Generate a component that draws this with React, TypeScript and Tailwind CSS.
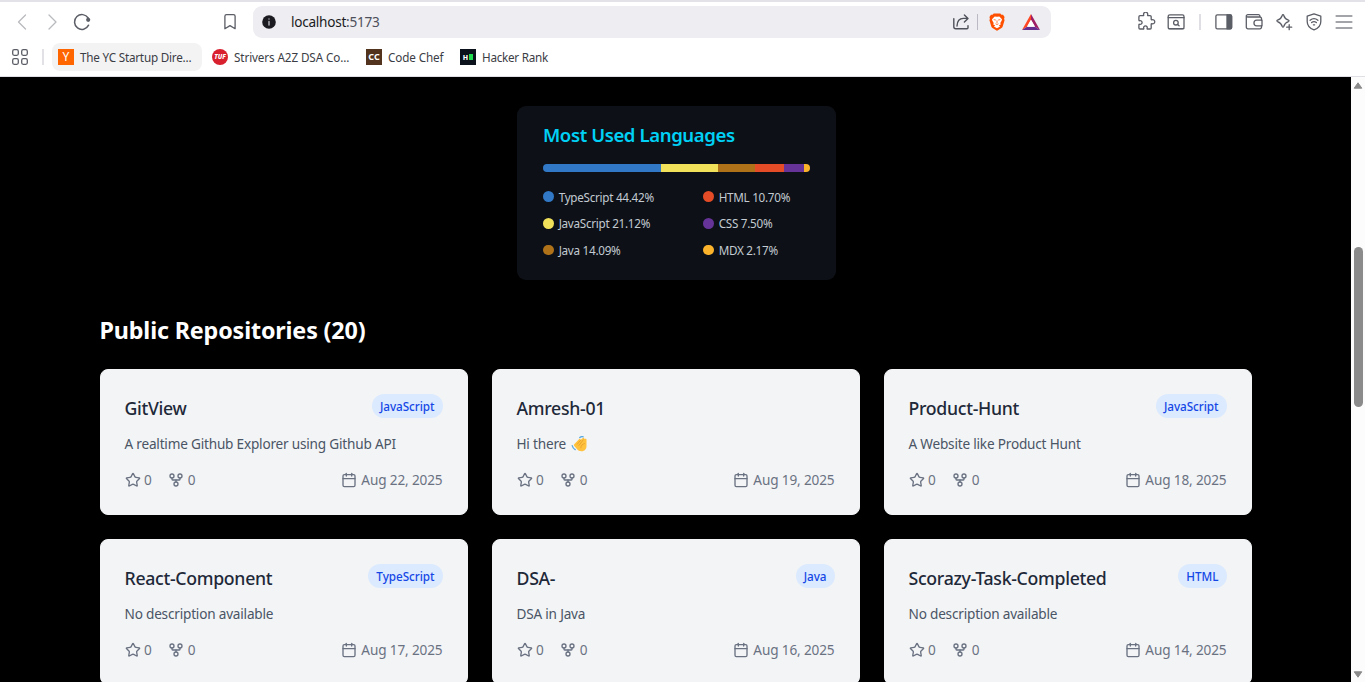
import React from "react";
import type { ReactNode } from "react";
import { Calendar, GitFork, Star } from "lucide-react";

type IconProps = { w?: number; h?: number; className?: string; children: ReactNode };

function Glyph({ w = 20, h = 20, className = "", children }: IconProps) {
  return (
    <svg
      width={w}
      height={h}
      viewBox={`0 0 ${w} ${h}`}
      fill="none"
      stroke="currentColor"
      strokeWidth="1.3"
      strokeLinecap="round"
      strokeLinejoin="round"
      className={`block shrink-0 ${className}`}
    >
      {children}
    </svg>
  );
}

function Toolbar() {
  return (
    <div className="flex h-10 items-center text-[#5b5e66]">
      <Glyph className="ml-3 text-[#b9babe]">
        <path d="M13.5 3 6.5 10l7 7" />
      </Glyph>
      <Glyph className="ml-[10px] text-[#b9babe]">
        <path d="M7 3l7 7-7 7" />
      </Glyph>
      <Glyph className="ml-[10px]">
        <path d="M16.6 13.2A7.4 7.4 0 1 1 16.2 6" strokeWidth="1.5" />
        <circle cx="16.2" cy="7.8" r="2.1" fill="currentColor" stroke="none" />
      </Glyph>
      <Glyph className="ml-[128px]">
        <path d="M4.9 4.2a1.6 1.6 0 0 1 1.6-1.6h7a1.6 1.6 0 0 1 1.6 1.6v12.500L10 13.600l-5.100 3.100Z" />
      </Glyph>
      <div className="ml-[13px] flex h-8 w-[798px] items-center rounded-[9px] bg-[#ededf2]">
        <Glyph className="ml-[6px]">
          <circle cx="10" cy="10" r="6.8" fill="#1b1b21" stroke="none" />
          <path d="M10 9.4v3.6M10 7v.1" stroke="#b9b9c0" strokeWidth="1.4" />
        </Glyph>
        <span className="ml-3 w-[200px] whitespace-nowrap text-[13.6px] leading-5 tracking-[-0.26px] text-[#1b1b21]">
          localhost<span className="text-[#4d4f5a]">:5173</span>
        </span>
        <Glyph className="ml-[460px] text-[#4f515a]">
          <path d="M2.8 6.6v8.2a2 2 0 0 0 2 2H16a1 1 0 0 0 1-1v-2M6 14c.2-4.600 2.600-7.600 6.400-7.600h4.200M13.400 3l3.600 3.400-3.600 3.500" strokeWidth="1.4" />
        </Glyph>
        <span className="ml-[6px] h-4 w-px bg-[#b9bac3]" />
        <span className="ml-[10px] flex h-5 w-[18px] items-center justify-center">
          <svg width="16" height="18" viewBox="0 0 18 20" className="block">
            <path d="M4.500 2h9L17 5.500 15 14l-6 5-6-5L1 5.500Z" fill="#fff" />
            <path
              fillRule="evenodd"
              fill="#ff5000"
              d="M5.300 .5h7.400l1.300 1.400h1.800l1.700 2.600-.5 1.900.5 1.500-2 6.900c-.2.800-.7 1.500-1.400 2L9.600 19.700a1.200 1.200 0 0 1-1.200 0l-4.500-2.900c-.7-.5-1.200-1.200-1.400-2L.5 7.900l.5-1.500-.5-1.900 1.700-2.600H4ZM9 4.200l-2.600-.4-3 3 .4 1.900L5.300 11.200l-.6 1.500 2.200 1L5.600 15 9 17l3.400-2-1.300-1.300 2.200-1-.6-1.500 1.500-2.500.4-1.900-3-3Z"
            />
            <path d="M5.300 7.300l2.400.5M12.700 7.300l-2.400.5M9 8.200v3.200M7.300 12l1.700.9 1.700-.9" stroke="#ff5000" strokeWidth=".8" fill="none" />
          </svg>
        </span>
        <svg width="20" height="20" viewBox="0 0 20 20" className="ml-[15px] block">
          <path d="M10 2 1 18l5-3.200 4-7Z" fill="#ff4724" />
          <path d="M10 2l9 16-5-3.200-4-7Z" fill="#9e1f63" />
          <path d="M1 18h18l-5-3.200H6Z" fill="#662d91" />
          <path d="M10 7.800l4 7H6Z" fill="#fff" />
        </svg>
      </div>
      <Glyph className="ml-[85px]">
        <path d="M4 3.700h3.200c.5 0 .6-.3.500-.7a2.100 2.100 0 1 1 3.900 0c-.1.400 0 .7.500.700h2c.7 0 1.100.4 1.100 1.100v2.400c0 .5.300.7.700.600a2.100 2.100 0 1 1 0 3.900c-.4-.1-.7.100-.7.600v3.600c0 .7-.4 1.100-1.100 1.100h-2.500c-.5 0-.6-.3-.5-.7a1.800 1.800 0 1 0-3.300 0c.1.400 0 .7-.5.700H4c-.7 0-1.100-.4-1.100-1.100v-3c0-.5.300-.7.700-.6a1.900 1.900 0 1 0 0-3.600c-.4.100-.7-.1-.7-.600V4.800C2.900 4.100 3.300 3.700 4 3.700Z" />
      </Glyph>
      <Glyph className="ml-[10px]">
        <rect x="2.200" y="2.800" width="15.800" height="14" rx="1.600" />
        <path d="M2.200 5.700H18M2.400 16.600h15.400" />
        <circle cx="9.900" cy="10.700" r="2.300" />
        <path d="M11.600 12.400l1.500 1.400" />
      </Glyph>
      <span className="ml-[13px] h-4 w-[2px] bg-[#dedee4]" />
      <Glyph className="ml-[13px]">
        <rect x="1.900" y="2.800" width="15.700" height="14" rx="1.400" />
        <path d="M13 2.800h3.200a1.400 1.400 0 0 1 1.400 1.400v11.200a1.400 1.400 0 0 1-1.400 1.400H13Z" fill="currentColor" />
      </Glyph>
      <Glyph className="ml-[10px]">
        <path d="M17.500 8V6.600A1.600 1.600 0 0 0 15.900 5H4a1.500 1.500 0 0 1-1.700-1.400M2.300 4v11.200a1.600 1.600 0 0 0 1.600 1.600h12a1.600 1.600 0 0 0 1.600-1.600V14M4 2.700h10.500a1.400 1.400 0 0 1 1.400 1.400V5M4 2.700A1.500 1.500 0 0 0 2.300 4" />
        <path d="M18 8.100h-5.200a2.800 2.800 0 0 0 0 5.700H18Z" />
      </Glyph>
      <Glyph className="ml-[10px]">
        <path d="M9 2.600c.4 0 .6.200.7.600.9 3 1.800 4 4.700 4.900.8.300.8 1.200 0 1.500-2.900.900-3.800 1.900-4.700 4.900-.3.700-1.100.7-1.400 0-.9-3-1.900-4-4.800-4.900-.8-.3-.8-1.200 0-1.500 2.900-.900 3.900-1.900 4.800-4.900.1-.4.300-.6.700-.6ZM15.200 12.700v5M12.700 15.200h5" />
      </Glyph>
      <Glyph className="ml-[10px]">
        <path d="M10 1.900l6.800 2.200v5.400c0 4-2.700 6.900-6.800 8.400-4.100-1.500-6.800-4.400-6.800-8.400V4.100Z" />
        <path d="M6.100 8.300c2.400-2 5.400-2 7.800 0M7.600 10.600c1.500-1.200 3.300-1.200 4.800 0M9.400 12.800h1.200" />
      </Glyph>
      <Glyph className="ml-[10px] text-[#85878f]">
        <path d="M2.200 4h15.600M2.200 10h15.600M2.200 16h15.600" strokeWidth="1.600" />
      </Glyph>
    </div>
  );
}

function BookmarksBar() {
  return (
    <div className="mt-px flex h-7 items-center whitespace-nowrap text-[11.7px] leading-4 text-[#3b3d45]">
      <Glyph className="ml-[10px] text-[#5b5e66]">
        <rect x="2.700" y="2.700" width="5.600" height="5.600" rx="1.500" />
        <rect x="11.700" y="2.700" width="5.600" height="5.600" rx="1.500" />
        <rect x="2.700" y="11.700" width="5.600" height="5.600" rx="1.500" />
        <rect x="11.700" y="11.700" width="5.600" height="5.600" rx="1.500" />
      </Glyph>
      <span className="ml-3 h-4 w-[2px] bg-[#e1e1e6]" />
      <div className="ml-2 flex h-7 w-[150px] items-center gap-[6px] rounded-lg bg-[#f3f3f4] pl-[6px]">
        <span className="flex size-4 items-center justify-center bg-[#ff6600] text-[12px] text-white">Y</span>
        <span className="tracking-[-0.21px]">The YC Startup Dire...</span>
      </div>
      <div className="ml-[10px] flex w-[154px] items-center gap-[6px]">
        <span className="flex size-4 items-center justify-center rounded-full bg-[#d9202f] text-[6.5px] font-extrabold italic text-white">TUF</span>
        <span className="tracking-[-0.11px]">Strivers A2Z DSA Co...</span>
      </div>
      <div className="flex w-[94px] items-center gap-[6px]">
        <span className="flex size-4 items-center justify-center bg-[#52331d] text-[9px] font-bold text-white">CC</span>
        <span className="tracking-[-0.11px]">Code Chef</span>
      </div>
      <div className="flex items-center gap-[6px]">
        <span className="flex size-4 items-center justify-center gap-px bg-[#0b121c] text-[7px] font-extrabold leading-none text-white">
          H<span className="h-[6px] w-1 bg-[#1fdd4f]" />
        </span>
        <span className="tracking-[-0.26px]">Hacker Rank</span>
      </div>
    </div>
  );
}

const bar = [
  "w-[118.4px] bg-[#3178c6]",
  "w-[56.3px] bg-[#f1e05a]",
  "w-[37.6px] bg-[#b07219]",
  "w-[28.5px] bg-[#e34c26]",
  "w-[20px] bg-[#663399]",
  "w-[5.9px] bg-[#fcb32c]",
];

const languages: [string, string][] = [
  ["TypeScript 44.42%", "bg-[#3178c6]"],
  ["HTML 10.70%", "bg-[#e34c26]"],
  ["JavaScript 21.12%", "bg-[#f1e05a]"],
  ["CSS 7.50%", "bg-[#663399]"],
  ["Java 14.09%", "bg-[#b07219]"],
  ["MDX 2.17%", "bg-[#fcb32c]"],
];

function LanguagesCard() {
  return (
    <section className="ml-[516.5px] mt-[29px] h-[174px] w-[319px] rounded-[9px] bg-[#0d1117] pl-[26.5px] pt-[15px]">
      <h2 className="text-[18.6px] font-semibold leading-7 tracking-[-0.42px] text-[#00d0f5]">Most Used Languages</h2>
      <div className="mt-[15px] flex h-2 w-[266.7px] overflow-hidden rounded-full">
        {bar.map((c) => (
          <span key={c} className={`shrink-0 ${c}`} />
        ))}
      </div>
      <ul className="mt-[11.5px] grid grid-cols-[160px_1fr] text-[11.7px] leading-[26.6px] tracking-[-0.28px] text-[#c3cad2]">
        {languages.map(([label, color]) => (
          <li key={label} className="flex items-center gap-[5px]">
            <span className={`size-[10.7px] rounded-full ${color}`} />
            {label}
          </li>
        ))}
      </ul>
    </section>
  );
}

function WavingHand() {
  return (
    <svg width="16" height="16" viewBox="0 0 16 16" className="ml-[5px] inline-block align-[-3px]">
      <path
        d="M3.200 8.300 8 3.200c.7-.7 1.700-.2 1.600.7L11.800 1.900c.8-.5 1.500.1 1.300.9l1.700-.1c.6.1.7.500.7 1.200v6.400c0 2.800-2 5-4.800 5-2.200 0-3.600-.8-4.800-2.200L3.300 10c-.6-.7-.6-1.200-.1-1.700Z"
        fill="#ffc23e"
      />
      <path d="M6.200 8.200 9.700 4.200M8 9.400l4.200-5.500M9.800 11.800c.2-2.300 1.500-3.700 3.600-4.200" stroke="#e39a2c" strokeWidth=".8" fill="none" strokeLinecap="round" />
      <path d="M1.200 9.600c.5 2.100 1.300 3.100 3 4M8.800 1.600c1-.9 2.200-1.200 3.400-.8" stroke="#5aa9e0" strokeWidth="1.300" fill="none" strokeLinecap="round" />
    </svg>
  );
}

type Repo = { name: string; description: string; waving?: boolean; language?: string; date: string };

const repos: Repo[] = [
  { name: "GitView", description: "A realtime Github Explorer using Github API", language: "JavaScript", date: "Aug 22, 2025" },
  { name: "Amresh-01", description: "Hi there", waving: true, date: "Aug 19, 2025" },
  { name: "Product-Hunt", description: "A Website like Product Hunt", language: "JavaScript", date: "Aug 18, 2025" },
  { name: "React-Component", description: "No description available", language: "TypeScript", date: "Aug 17, 2025" },
  { name: "DSA-", description: "DSA in Java", language: "Java", date: "Aug 16, 2025" },
  { name: "Scorazy-Task-Completed", description: "No description available", language: "HTML", date: "Aug 14, 2025" },
];

function RepoCard({ repo }: { repo: Repo }) {
  return (
    <article className="h-[146px] rounded-lg border border-gray-100 bg-gray-100 p-6">
      <div className="flex items-start justify-between">
        <h3 className="text-[17.7px] font-[550] leading-7 tracking-[-0.3px] text-gray-800">{repo.name}</h3>
        {repo.language && (
          <span className="rounded-full bg-blue-100 px-2 py-1 text-[11.7px] font-medium leading-4 tracking-[-0.03px] text-blue-700">
            {repo.language}
          </span>
        )}
      </div>
      <p className="mt-3 h-5 text-[13.6px] leading-5 tracking-[-0.2px] text-gray-600">
        {repo.description}
        {repo.waving && <WavingHand />}
      </p>
      <div className="mt-4 flex h-5 items-center justify-between text-[13.6px] leading-5 tracking-[-0.14px] text-gray-500">
        <div className="flex gap-4">
          <span className="flex items-center gap-[3.5px]">
            <Star size={16} /> 0
          </span>
          <span className="flex items-center gap-[4px]">
            <GitFork size={16} /> 0
          </span>
        </div>
        <span className="flex items-center gap-[4.5px]">
          <Calendar size={16} /> {repo.date}
        </span>
      </div>
    </article>
  );
}

function Scrollbar() {
  return (
    <div className="flex w-[14px] shrink-0 flex-col items-center bg-[#fcfcfc]">
      <svg width="10" height="7" viewBox="0 0 10 7" className="mt-[5px] block">
        <path d="M5 .8 8.800 6.200H1.200Z" fill="#8b8b8b" stroke="#8b8b8b" strokeLinejoin="round" />
      </svg>
      <div className="mt-[158px] h-[160px] w-[9px] rounded-full bg-[#8b8b8b]" />
      <svg width="10" height="7" viewBox="0 0 10 7" className="mb-[4px] mt-auto block">
        <path d="M5 6.200 8.800.8H1.200Z" fill="#8b8b8b" stroke="#8b8b8b" strokeLinejoin="round" />
      </svg>
    </div>
  );
}

export default function App() {
  return (
    <div className="flex h-[682px] w-[1365px] flex-col overflow-hidden bg-white font-['Noto_Sans',sans-serif]">
      <header className="h-[77px] shrink-0 border-b border-t-2 border-b-[#dfe0e4] border-t-[#e2e2e8]">
        <Toolbar />
        <BookmarksBar />
      </header>
      <div className="flex min-h-0 flex-1">
        <main className="h-full w-[1351px] overflow-hidden bg-black">
          <LanguagesCard />
          <section className="mx-auto mt-[34px] w-[1152px]">
            <h1 className="text-[23.3px] font-bold leading-8 tracking-[-0.155px] text-white">Public Repositories (20)</h1>
            <div className="mt-[23px] grid grid-cols-3 gap-6">
              {repos.map((r) => (
                <RepoCard key={r.name} repo={r} />
              ))}
            </div>
          </section>
        </main>
        <Scrollbar />
      </div>
    </div>
  );
}
